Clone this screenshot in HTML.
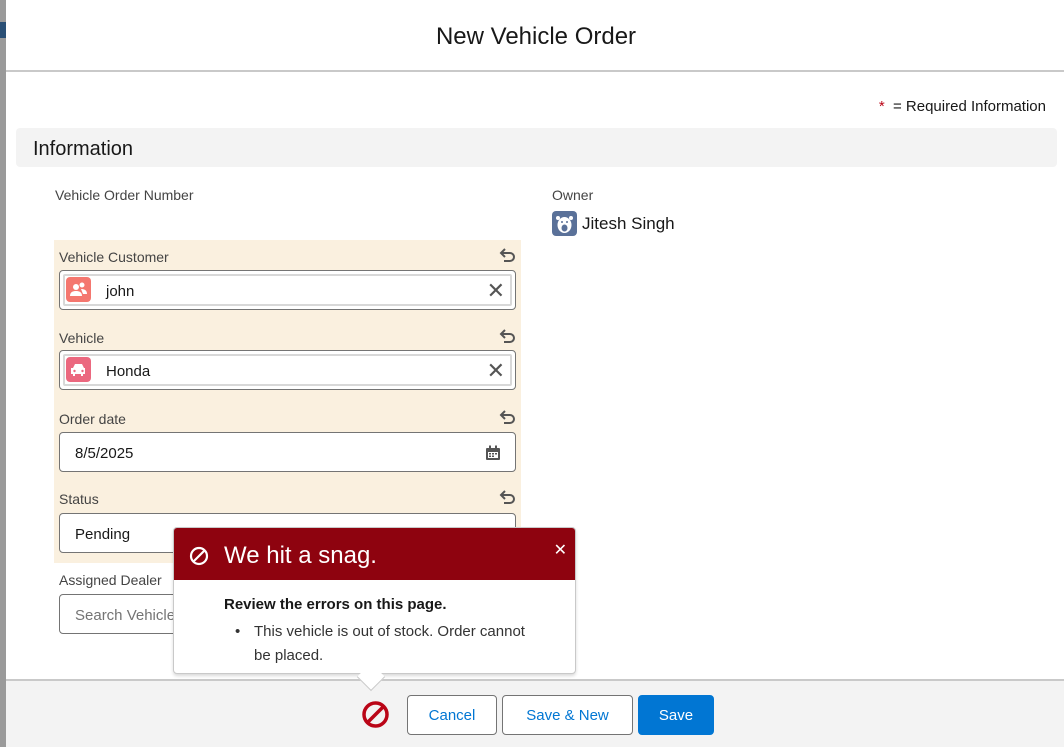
<!DOCTYPE html><html><head><style>
*{box-sizing:border-box;margin:0;padding:0}
body{width:1064px;height:747px;overflow:hidden;background:#fff;font-family:"Liberation Sans",sans-serif;color:#181818;position:relative}
.a{position:absolute}
.lbl{font-size:14px;color:#444}
.inp{position:absolute;left:59px;width:457px;height:40px;border:1px solid #747474;border-radius:4px;background:#fff;font-size:15px}
.pill{position:absolute;left:3px;top:3px;right:3px;bottom:3px;border:2px solid #d8d8d8;border-radius:2px}
.und{position:absolute;left:498px;width:18px;height:18px}
.btn{position:absolute;top:695px;height:40px;border:1px solid #747474;border-radius:4px;background:#fff;color:#0176d3;font-size:15px;text-align:center;line-height:40px}
</style></head><body>
<div class="a" style="left:0;top:0;width:6px;height:747px;background:#9a9a9a"></div>
<div class="a" style="left:0;top:22px;width:6px;height:16px;background:#2a4f75"></div>
<div class="a" style="left:6px;top:0;width:1058px;height:72px;border-bottom:2px solid #c9c9c9"></div>
<div class="a" style="top:23px;width:858px;text-align:center;font-size:24px;left:107px">New Vehicle Order</div>
<div class="a" style="right:18px;top:98px;font-size:15px"><span style="color:#ba0517">*</span>&nbsp; = Required Information</div>
<div class="a" style="left:16px;top:128px;width:1041px;height:39px;background:#f3f3f3;border-radius:4px"></div>
<div class="a" style="left:33px;top:138px;font-size:20px">Information</div>
<div class="a lbl" style="left:55px;top:187px">Vehicle Order Number</div>
<div class="a lbl" style="left:552px;top:187px">Owner</div>
<div class="a" style="left:552px;top:211px;width:25px;height:25px;background:#5a7199;border-radius:4px">
<svg width="25" height="25" viewBox="0 0 25 25"><ellipse cx="12.5" cy="14" rx="7" ry="8" fill="#fff"/><circle cx="6" cy="7" r="2" fill="#fff"/><circle cx="19" cy="7" r="2" fill="#fff"/><ellipse cx="12.5" cy="17" rx="3" ry="3.5" fill="#5a7199"/><circle cx="10" cy="11" r="1" fill="#5a7199"/><circle cx="15" cy="11" r="1" fill="#5a7199"/></svg></div>
<div class="a" style="left:582px;top:214px;font-size:17px">Jitesh Singh</div>
<div class="a" style="left:54px;top:240px;width:467px;height:323px;background:#faf0df"></div>
<div class="a lbl" style="left:59px;top:249px">Vehicle Customer</div>
<div class="a lbl" style="left:59px;top:330px">Vehicle</div>
<div class="a lbl" style="left:59px;top:411px">Order date</div>
<div class="a lbl" style="left:59px;top:491px">Status</div>
<svg class="und" style="top:246px" viewBox="0 0 18 18"><path d="M4 7h8a4 4 0 0 1 0 8H6M7 3L3 7l4 4" fill="none" stroke="#555" stroke-width="2"/></svg>
<svg class="und" style="top:327px" viewBox="0 0 18 18"><path d="M4 7h8a4 4 0 0 1 0 8H6M7 3L3 7l4 4" fill="none" stroke="#555" stroke-width="2"/></svg>
<svg class="und" style="top:408px" viewBox="0 0 18 18"><path d="M4 7h8a4 4 0 0 1 0 8H6M7 3L3 7l4 4" fill="none" stroke="#555" stroke-width="2"/></svg>
<svg class="und" style="top:488px" viewBox="0 0 18 18"><path d="M4 7h8a4 4 0 0 1 0 8H6M7 3L3 7l4 4" fill="none" stroke="#555" stroke-width="2"/></svg>
<div class="inp" style="top:270px"><div class="pill"></div>
<div class="a" style="left:6px;top:6px;width:25px;height:25px;border-radius:4px;background:#f4776f"><svg width="25" height="25" viewBox="0 0 25 25"><circle cx="10" cy="10" r="3" fill="#fff"/><path d="M4 19c0-4 3-5 6-5s6 1 6 5z" fill="#fff"/><circle cx="16" cy="8" r="2.5" fill="#fff"/><path d="M15 12c3 0 6 1 6 5h-4z" fill="#fff"/></svg></div>
<div class="a" style="left:46px;top:12px">john</div>
<div class="a" style="right:10px;top:7px;font-size:22px;color:#555">✕</div></div>
<div class="inp" style="top:350px"><div class="pill"></div>
<div class="a" style="left:6px;top:6px;width:25px;height:25px;background:#eb687f;border-radius:4px"><svg width="25" height="25" viewBox="0 0 25 25"><path d="M7 11l2-4h7l2 4h1v6h-2v2h-2v-2H9v2H7v-2H5v-6z" fill="#fff"/><circle cx="8.5" cy="14" r="1.2" fill="#eb687f"/><circle cx="16.5" cy="14" r="1.2" fill="#eb687f"/></svg></div>
<div class="a" style="left:46px;top:12px">Honda</div>
<div class="a" style="right:10px;top:7px;font-size:22px;color:#555">✕</div></div>
<div class="inp" style="top:432px"><div class="a" style="left:15px;top:12px">8/5/2025</div>
<svg class="a" style="right:14px;top:12px" width="16" height="16" viewBox="0 0 16 16"><rect x="1" y="3" width="14" height="12" rx="1" fill="#555"/><rect x="3" y="7" width="10" height="6" fill="#fff"/><rect x="4" y="0.5" width="2" height="4" fill="#555"/><rect x="10" y="0.5" width="2" height="4" fill="#555"/><rect x="4" y="8" width="2" height="1.5" fill="#555"/><rect x="7" y="8" width="2" height="1.5" fill="#555"/><rect x="10" y="8" width="2" height="1.5" fill="#555"/><rect x="4" y="10.5" width="2" height="1.5" fill="#555"/><rect x="7" y="10.5" width="2" height="1.5" fill="#555"/></svg></div>
<div class="inp" style="top:513px"><div class="a" style="left:15px;top:12px">Pending</div></div>
<div class="a lbl" style="left:59px;top:572px">Assigned Dealer</div>
<div class="inp" style="top:594px"><div class="a" style="left:15px;top:12px;color:#747474">Search Vehicle</div></div>
<div class="a" style="left:6px;top:679px;width:1058px;height:68px;background:#f3f3f3;border-top:2px solid #c9c9c9"></div>
<svg class="a" style="left:361px;top:700px" width="29" height="29" viewBox="0 0 29 29"><circle cx="14.5" cy="14.5" r="11.5" fill="none" stroke="#ba0517" stroke-width="3.5"/><path d="M7 22L22 7" stroke="#ba0517" stroke-width="3.5"/></svg>
<div class="btn" style="left:407px;width:90px">Cancel</div>
<div class="btn" style="left:502px;width:131px">Save &amp; New</div>
<div class="btn" style="left:638px;width:76px;background:#0176d3;border-color:#0176d3;color:#fff">Save</div>
<div class="a" style="left:173px;top:527px;width:403px;height:147px;background:#fff;border:1px solid #c9c9c9;border-radius:4px;box-shadow:0 2px 3px rgba(0,0,0,.15);overflow:hidden">
<div style="height:52px;background:#8e030f;color:#fff;position:relative">
<svg class="a" style="left:15px;top:18px" width="20" height="20" viewBox="0 0 20 20"><circle cx="10" cy="10" r="8" fill="none" stroke="#fff" stroke-width="2.2"/><path d="M5 15L15 5" stroke="#fff" stroke-width="2.2"/></svg>
<div class="a" style="left:50px;top:14px;font-size:24px">We hit a snag.</div>
<div class="a" style="right:8px;top:12px;font-size:16px">✕</div></div>
<div class="a" style="left:50px;top:68px;font-size:15px;font-weight:bold">Review the errors on this page.</div>
<div class="a" style="left:61px;top:92px;font-size:15px;color:#333;line-height:24px">•</div>
<div class="a" style="left:80px;top:92px;width:288px;font-size:15px;color:#333;line-height:24px">This vehicle is out of stock. Order cannot be placed.</div>
</div>
<div class="a" style="left:361px;top:667px;width:20px;height:20px;background:#fff;transform:rotate(45deg);border-right:1px solid #c9c9c9;border-bottom:1px solid #c9c9c9"></div>
</body></html>
